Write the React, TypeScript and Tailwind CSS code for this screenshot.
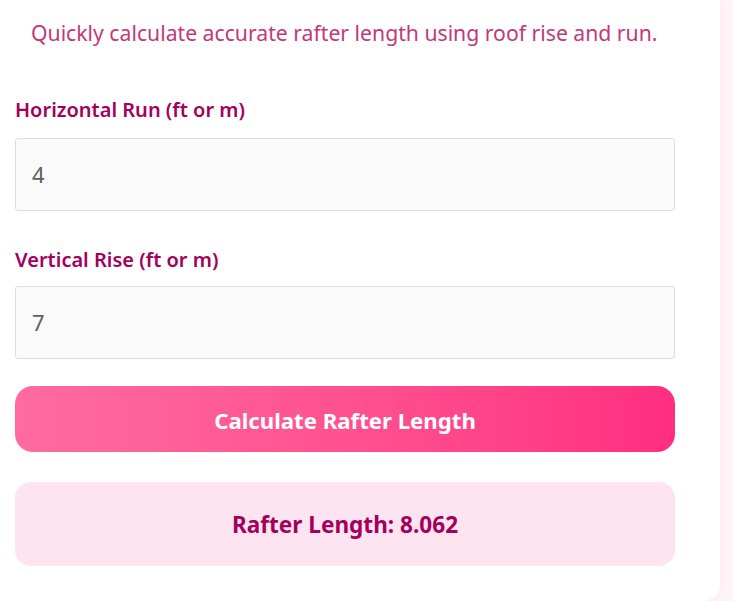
import React from "react";

export default function App() {
  return (
    <div
      className="flex h-[601px] w-[733px] overflow-hidden bg-[#fff3f9]"
      style={{ fontFamily: '"Noto Sans", "Open Sans", sans-serif' }}
    >
      <div className="h-[601px] w-[720px] shrink-0 rounded-br-[16px] bg-white shadow-[0_0_8px_rgba(255,105,180,0.08)]">
        <p className="pl-[31px] pt-[19px] text-[21.2px] leading-[28px] text-[#c2387a]">
          Quickly calculate accurate rafter length using roof rise and run.
        </p>
        <div className="mt-[51px] pl-[15px] pr-[45px]">
          <label className="block text-[20px] font-semibold leading-[24px] text-[#a3005c]">
            Horizontal Run (ft or m)
          </label>
          <div className="mt-[16px] flex h-[73px] items-center rounded-[3px] border border-[#dedede] bg-[#fafafa] pl-[16px] text-[22px] text-[#5f5f5f]">
            4
          </div>
          <label className="mt-[37px] block text-[20px] font-semibold leading-[24px] text-[#a3005c]">
            Vertical Rise (ft or m)
          </label>
          <div className="mt-[14px] flex h-[73px] items-center rounded-[3px] border border-[#dedede] bg-[#fafafa] pl-[16px] text-[22px] text-[#5f5f5f]">
            7
          </div>
          <button className="mt-[27px] flex h-[66px] w-full items-center justify-center rounded-[18px] bg-gradient-to-r from-[#ff6b9f] to-[#ff2d80] pt-[3px] text-[22.2px] font-bold text-white">
            Calculate Rafter Length
          </button>
          <div className="mt-[30px] flex h-[84px] items-center justify-center rounded-[16px] bg-[#fde4f0] pt-[2px] text-[22.6px] font-bold text-[#a3005c]">
            Rafter Length: 8.062
          </div>
        </div>
      </div>
    </div>
  );
}
